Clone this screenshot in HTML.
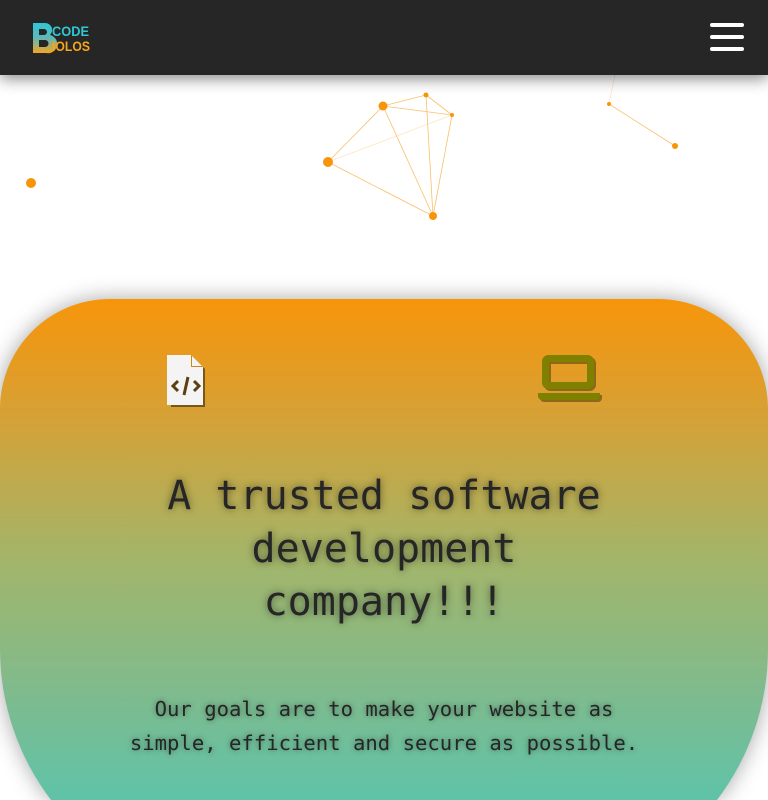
<!DOCTYPE html>
<html><head><meta charset="utf-8"><style>
*{margin:0;padding:0;box-sizing:border-box}
html,body{width:768px;height:800px;overflow:hidden}
body{background:#fff;position:relative;font-family:"DejaVu Sans Mono","Liberation Mono",monospace}
.nav{position:absolute;top:0;left:0;width:768px;height:75px;background:#262626;box-shadow:0 4px 14px rgba(0,0,0,.45);z-index:3}
.logo{position:absolute;left:32px;top:22px;width:60px;height:32px}
.burger{position:absolute;left:710px;top:23px;width:34px}
.burger i{display:block;height:4px;background:#fff;border-radius:2px;margin-bottom:8px}
.wrap{position:absolute;left:0;top:0;width:768px;height:800px;overflow:hidden}
.cw{position:absolute;left:0;top:299px;width:768px;height:501px;filter:drop-shadow(0 0 11px rgba(0,0,0,.35))}
.card{width:768px;height:501px;clip-path:path("M110,0 H658 A110,110 0 0 1 768,110 V350 A250,250 0 0 1 717,501 H51 A250,250 0 0 1 0,350 V110 A110,110 0 0 1 110,0 Z");background:linear-gradient(#f7950a 0px,#d8a033 110px,#a3b56a 260px,#7dbb8f 400px,#5fc3a8 501px)}
h1{position:absolute;top:470px;left:0;width:768px;text-align:center;font-weight:normal;font-size:40px;line-height:53px;color:#262626;text-shadow:0 0 8px rgba(0,0,0,.5)}
p{position:absolute;top:692px;left:0;width:768px;text-align:center;font-size:20.6px;line-height:34px;color:#262626;text-shadow:0 0 6px rgba(0,0,0,.45)}
svg{position:absolute}
</style></head><body>
<div class="wrap">
<div class="nav">
<svg class="logo" viewBox="0 0 60 32">
<defs><linearGradient id="g" x1="0" y1="0" x2="0" y2="1"><stop offset="0" stop-color="#2ec8d6"/><stop offset=".5" stop-color="#5fb8b8"/><stop offset="1" stop-color="#f7a51c"/></linearGradient></defs>
<path d="M1 1h12a7 7 0 0 1 5 12a8 8 0 0 1-4 18H1zM7 7v6h5a3 3 0 0 0 0-6zM7 18v7h6a3.5 3.5 0 0 0 0-7z" fill="url(#g)" fill-rule="evenodd"/>
<text x="20" y="14" font-family="Liberation Sans" font-weight="bold" font-size="14" fill="#2ec8d6" textLength="37" lengthAdjust="spacingAndGlyphs">CODE</text>
<text x="20" y="29" font-family="Liberation Sans" font-weight="bold" font-size="14" fill="#f7a51c" textLength="38" lengthAdjust="spacingAndGlyphs">IOLOS</text>
</svg>
<div class="burger"><i></i><i></i><i></i></div>
</div>
<svg width="768" height="300" style="left:0;top:0" viewBox="0 0 768 300">
<g stroke="#f7950a" stroke-width="0.8" opacity=".6">
<line x1="383" y1="106" x2="426" y2="95"/><line x1="383" y1="106" x2="452" y2="115"/><line x1="426" y1="95" x2="452" y2="115"/>
<line x1="383" y1="106" x2="328" y2="162"/><line x1="383" y1="106" x2="433" y2="216"/><line x1="426" y1="95" x2="433" y2="216"/>
<line x1="452" y1="115" x2="433" y2="216"/><line x1="328" y1="162" x2="433" y2="216"/><line x1="328" y1="162" x2="452" y2="115" opacity=".4"/>
<line x1="609" y1="104" x2="675" y2="146"/><line x1="609" y1="104" x2="615" y2="75" opacity=".4"/>
</g>
<g fill="#f7950a"><circle cx="383" cy="106" r="4.5"/><circle cx="426" cy="95" r="2.5"/><circle cx="452" cy="115" r="2"/><circle cx="328" cy="162" r="5"/><circle cx="433" cy="216" r="4"/><circle cx="609" cy="104" r="2"/><circle cx="675" cy="146" r="3"/><circle cx="31" cy="183" r="5"/></g>
</svg>
<div class="cw"><div class="card"></div></div>
<svg width="44" height="56" style="left:165px;top:353px" viewBox="0 0 44 56">
<path d="M4 2h22l12 12v38H4z" fill="#4a3a10" transform="translate(2,2)" opacity=".7"/>
<path d="M2 2h24l12 12v38H2z" fill="#f4f4f4"/>
<path d="M26 2v12h12z" fill="#c98a1a"/><path d="M27 3v10h10z" fill="#f4f4f4"/>
<path d="M13 28l-5 5 5 5M29 28l5 5-5 5M23 24l-4 18" stroke="#5a4012" stroke-width="3" fill="none"/>
</svg>
<svg width="66" height="56" style="left:538px;top:353px" viewBox="0 0 66 56">
<g transform="translate(2,2)" opacity=".55" stroke="#4a3a10" fill="none"><rect x="7.5" y="5.5" width="45" height="27" rx="3" stroke-width="7"/></g>
<path transform="translate(2,2)" opacity=".55" fill="#4a3a10" d="M0 40h62v3a4 4 0 0 1-4 4H4a4 4 0 0 1-4-4z"/>
<rect x="7.5" y="5.5" width="45" height="27" rx="3" stroke-width="7" stroke="#7f8000" fill="none"/>
<path fill="#7f8000" d="M0 40h62v3a4 4 0 0 1-4 4H4a4 4 0 0 1-4-4z"/>
</svg>
<h1>A trusted software<br>development<br>company!!!</h1>
<p>Our goals are to make your website as<br>simple, efficient and secure as possible.</p>
</div>
</body></html>
